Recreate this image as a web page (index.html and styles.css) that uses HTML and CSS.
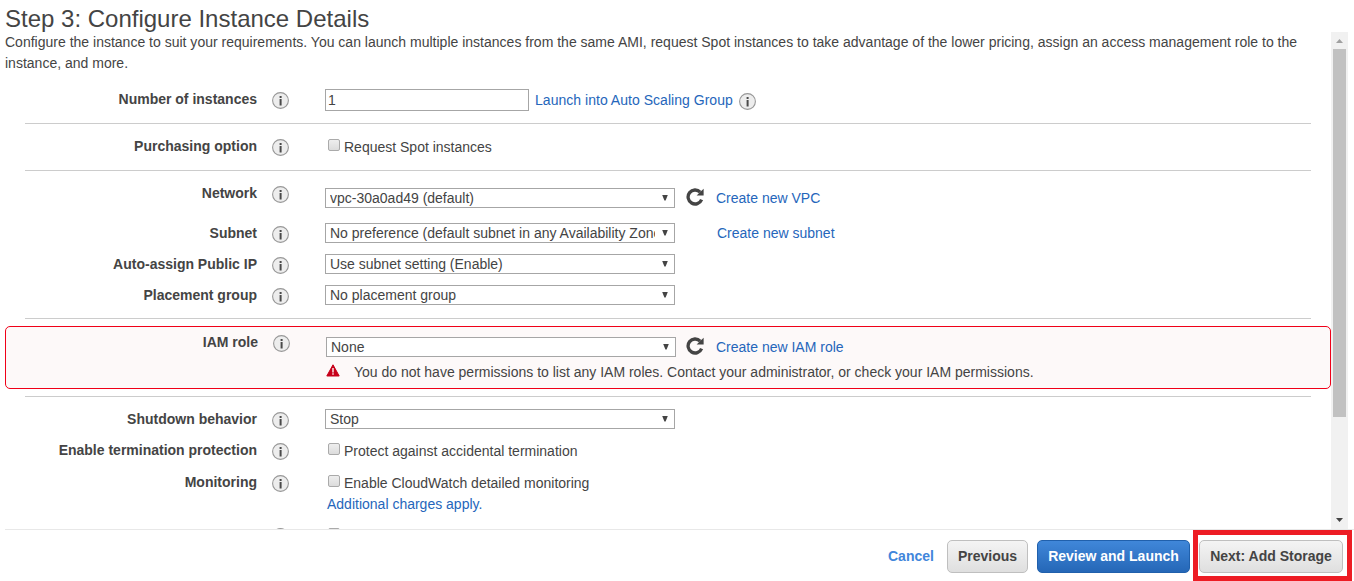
FILE: index.html
```
<!DOCTYPE html>
<html lang="en">
<head>
<meta charset="utf-8">
<title>Step 3: Configure Instance Details</title>
<link rel="stylesheet" href="styles.css">
</head>
<body>
<svg class="defs" aria-hidden="true">
  <symbol id="info" viewBox="0 0 17 17"><circle cx="8.5" cy="8.5" r="7.9" fill="#ededed" stroke="#989898" stroke-width="1.1"/><path d="M7.6 4h2v2h-2zM7.6 7h2v6.5h-2z" fill="#4a4a4a"/></symbol>
  <symbol id="refresh" viewBox="0 0 18 18"><path d="M14.2 4.2A7 7 0 1 0 15.6 11.6" fill="none" stroke="#444" stroke-width="3.3"/><path d="M17.6.8v6.6h-7z" fill="#444"/></symbol>
  <symbol id="alert" viewBox="0 0 14 13"><path d="M7 .8 13.2 12H.8z" fill="#c7001a" stroke="#c7001a" stroke-linejoin="round"/><path d="M6.2 4h1.6v4.5H6.2zM6.2 9.3h1.6v1.5H6.2z" fill="#f4d8dc"/></symbol>
</svg>
<div class="page">
  <h1 class="title">Step 3: Configure Instance Details</h1>
  <div class="viewport">
    <main class="form">
      <p class="intro">Configure the instance to suit your requirements. You can launch multiple instances from the same AMI, request Spot instances to take advantage of the lower pricing, assign an access management role to the<br>instance, and more.</p>

      <section class="group first">
        <div class="row">
          <label class="label" for="count">Number of instances</label><svg class="info"><use href="#info"/></svg>
          <input id="count" class="text" value="1"><a class="link after-input">Launch into Auto Scaling Group</a><svg class="info trailing"><use href="#info"/></svg>
        </div>
      </section>

      <section class="group purchase">
        <div class="row">
          <span class="label">Purchasing option</span><svg class="info"><use href="#info"/></svg>
          <span class="box"></span><span class="option">Request Spot instances</span>
        </div>
      </section>

      <section class="group network">
        <div class="row tall">
          <span class="label">Network</span><svg class="info"><use href="#info"/></svg>
          <div class="select low"><span class="value">vpc-30a0ad49 (default)</span><i class="arrow"></i></div>
          <svg class="refresh"><use href="#refresh"/></svg><a class="link low">Create new VPC</a>
        </div>
        <div class="row">
          <span class="label">Subnet</span><svg class="info"><use href="#info"/></svg>
          <div class="select"><span class="value">No preference (default subnet in any Availability Zone)</span><i class="arrow"></i></div>
          <a class="link subnet">Create new subnet</a>
        </div>
        <div class="row">
          <span class="label">Auto-assign Public IP</span><svg class="info"><use href="#info"/></svg>
          <div class="select"><span class="value">Use subnet setting (Enable)</span><i class="arrow"></i></div>
        </div>
        <div class="row">
          <span class="label">Placement group</span><svg class="info"><use href="#info"/></svg>
          <div class="select"><span class="value">No placement group</span><i class="arrow"></i></div>
        </div>
      </section>

      <section class="error">
        <div class="row">
          <span class="label">IAM role</span><svg class="info"><use href="#info"/></svg>
          <div class="select low"><span class="value">None</span><i class="arrow"></i></div>
          <svg class="refresh"><use href="#refresh"/></svg><a class="link low">Create new IAM role</a>
        </div>
        <div class="message"><svg class="alert"><use href="#alert"/></svg><span>You do not have permissions to list any IAM roles. Contact your administrator, or check your IAM permissions.</span></div>
      </section>

      <section class="advanced">
        <div class="row">
          <span class="label">Shutdown behavior</span><svg class="info"><use href="#info"/></svg>
          <div class="select"><span class="value">Stop</span><i class="arrow"></i></div>
        </div>
        <div class="row protect">
          <span class="label">Enable termination protection</span><svg class="info"><use href="#info"/></svg>
          <span class="box"></span><span class="option">Protect against accidental termination</span>
        </div>
        <div class="row monitor">
          <span class="label">Monitoring</span><svg class="info"><use href="#info"/></svg>
          <span class="box"></span><div class="option">Enable CloudWatch detailed monitoring<a class="link charges">Additional charges apply.</a></div>
        </div>
        <div class="row">
          <span class="label"></span><svg class="info"><use href="#info"/></svg><span class="box"></span>
        </div>
      </section>
    </main>
    <div class="scrollbar"><i class="up"></i><div class="thumb"></div><i class="down"></i></div>
  </div>
  <footer class="footer">
    <a class="cancel">Cancel</a>
    <button class="btn previous">Previous</button>
    <button class="btn primary">Review and Launch</button>
    <div class="highlight"><button class="btn next">Next: Add Storage</button></div>
  </footer>
</div>
</body>
</html>
```
FILE: styles.css
```
* { box-sizing: border-box; }
body {
  margin: 0;
  background: #fff;
  color: #444;
  font: 14px/21px "Liberation Sans", Arial, sans-serif;
  overflow: hidden;
}
.defs { display: none; }
.page { display: flex; flex-direction: column; width: 1354px; height: 581px; padding-left: 5px; }
.title { height: 32px; margin: 0; padding-top: 4px; font-size: 24px; font-weight: 400; line-height: 30px; white-space: nowrap; }
.viewport { display: flex; height: 497px; }
.form { width: 1326px; overflow: hidden; }
.intro { margin: 0; white-space: nowrap; letter-spacing: 0.005px; }

.group { margin: 0 20px; border-bottom: 1px solid #ccc; padding-top: 12px; }
.first { height: 50px; padding-top: 15px; }
.purchase { height: 47px; }
.network { height: 148px; }
.row { display: flex; align-items: flex-start; height: 31px; white-space: nowrap; }
.tall { height: 40px; }
.label { width: 232px; text-align: right; font-weight: 700; }
.info { flex: none; width: 17px; height: 17px; margin: 3px 36px 0 15px; }
.trailing { margin: 4px 0 0 6px; }
.text {
  width: 204px; height: 22px; padding: 0 2px; border: 1px solid #a6a6a6;
  color: #444; font: 14px "Liberation Sans", Arial, sans-serif;
}
.link { color: #2566bb; }
.after-input { margin: 1px 0 0 6px; letter-spacing: 0.03px; }
.select {
  display: flex; justify-content: space-between; align-items: center;
  width: 350px; height: 20px; padding: 0 6px 0 4px; border: 1px solid #a6a6a6; background: #fff;
}
.value { width: 325px; overflow: hidden; line-height: 18px; }
.arrow { width: 6px; height: 6px; margin-bottom: 1px; background: #444; clip-path: polygon(0 0, 100% 0, 60% 100%, 40% 100%); }
.low { margin-top: 5px; }
.refresh { width: 18px; height: 18px; margin: 5px 12px 0 11px; }
.subnet { margin-left: 42px; }
.box {
  flex: none; width: 12px; height: 12px; margin: 3px 4px 0 3px;
  border: 1px solid #aaa; border-radius: 2px; background: linear-gradient(#eee, #dcdcdc);
}
.option { margin-top: 1px; }

.error {
  height: 63px; margin-top: 7px; padding: 5px 0 0 20px;
  border: 1px solid #f00018; border-radius: 5px; background: #fdf9f9;
}
.error .row { height: 30px; }
.error .refresh { margin: 5px 12px 0 10px; }
.message { display: flex; align-items: flex-start; padding-left: 300px; }
.alert { width: 14px; height: 13px; margin: 2px 14px 0 0; }
.advanced { margin: 7px 20px 0; padding-top: 12px; border-top: 1px solid #ccc; }
.protect { height: 32px; }
.monitor { height: 53px; }
.charges { display: block; margin-left: -17px; }

.scrollbar { display: flex; flex-direction: column; align-items: center; width: 17px; background: #f1f1f1; }
.up { width: 7px; height: 4px; margin: 7px 0 6px; background: #a0a0a0; clip-path: polygon(50% 0, 100% 100%, 0 100%); }
.thumb { width: 13px; height: 368px; background: #c1c1c1; }
.down { width: 7px; height: 4px; margin: auto 0 7px; background: #444; clip-path: polygon(0 0, 100% 0, 50% 100%); }

.footer { display: flex; width: 1349px; height: 52px; padding-left: 883px; border-top: 1px solid #e8e8e8; font-weight: 700; }
.cancel { width: 59px; padding-top: 16px; color: #4186db; }
.btn {
  height: 33px; padding: 0 0 1px; border: 1px solid #bfbfbf; border-radius: 5px;
  background: linear-gradient(#f4f4f4, #dfdfdf); color: #444;
  font: 700 14px "Liberation Sans", Arial, sans-serif; white-space: nowrap;
}
.previous { width: 81px; margin-top: 10px; }
.primary { width: 153px; margin: 10px 3px 0 9px; border-color: #2060ac; background: linear-gradient(#4087d9, #2567b7); color: #fff; }
.highlight { width: 159px; height: 51px; border: 5px solid #ed1c24; padding: 5px 0 0 1px; }
.next { width: 144px; }
```
